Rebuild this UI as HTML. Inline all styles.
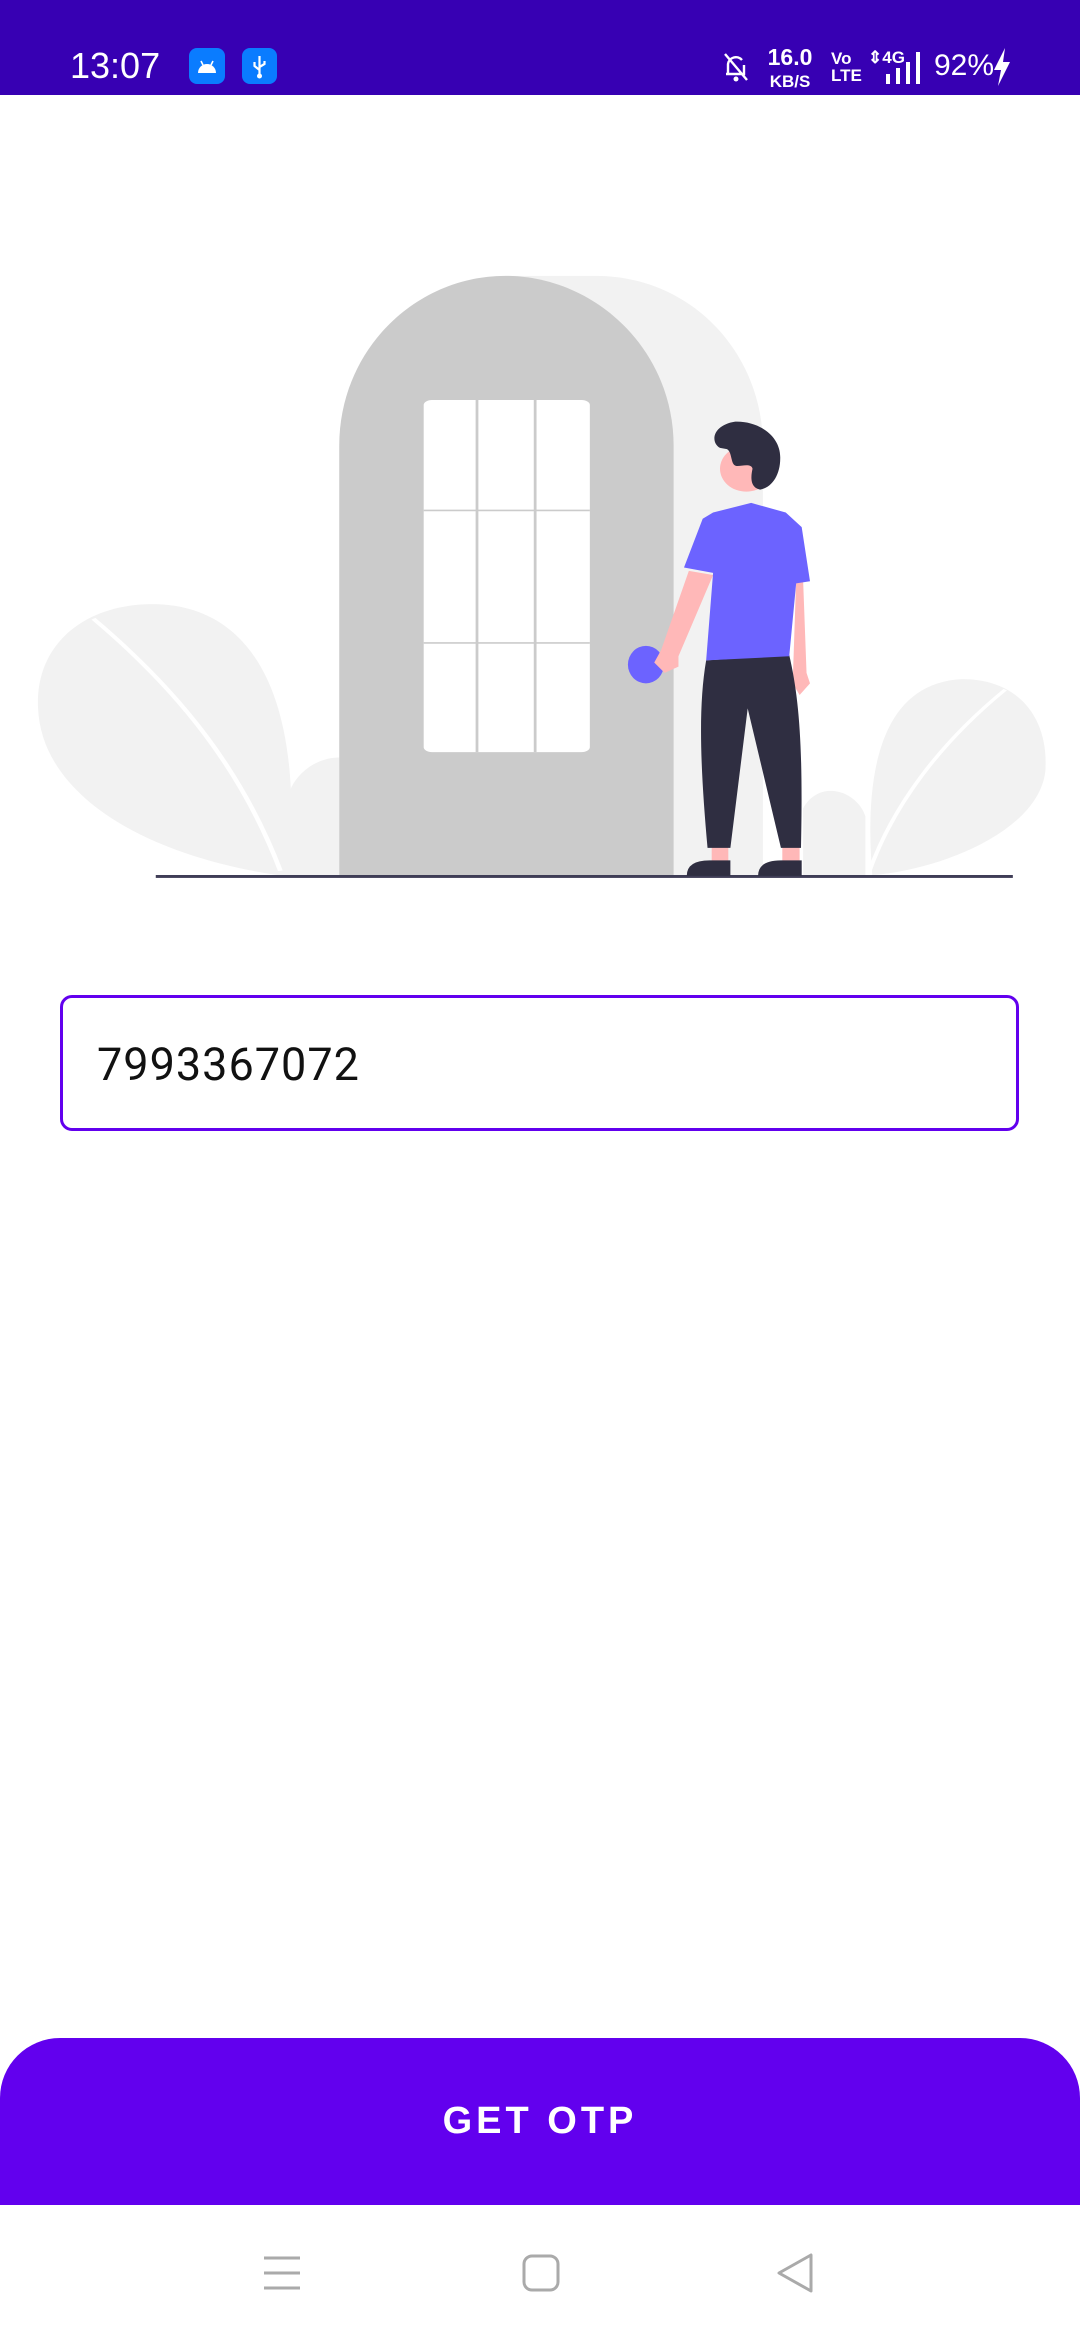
<!DOCTYPE html>
<html><head><meta charset="utf-8"><style>
*{margin:0;padding:0;box-sizing:border-box}
body{width:1080px;height:2340px;background:#fff;position:relative;overflow:hidden;font-family:"Liberation Sans",sans-serif}
.sb{position:absolute;left:0;top:0;width:1080px;height:95px;background:#3700b3;color:#fff}
.input{position:absolute;left:60px;top:995px;width:959px;height:136px;border:3px solid #6200ee;border-radius:12px;font-size:45px;letter-spacing:1px;color:#111;padding-left:34px;line-height:134px;font-family:"Roboto","Liberation Sans",sans-serif}
.btn{position:absolute;left:0;top:2038px;width:1080px;height:167px;background:#6200ee;border-radius:60px 60px 0 0;color:#fff;font-size:38px;letter-spacing:4px;text-align:center;line-height:167px;font-weight:bold}
.nav{position:absolute;left:0;top:2205px;width:1080px;height:135px;background:#fff}
</style></head><body>
<div class="sb">
<div style="position:absolute;left:70px;top:44px;font-size:36px;line-height:44px">13:07</div>
<div style="position:absolute;left:189px;top:48px;width:36px;height:36px;background:#0a7cff;border-radius:8px"></div>
<svg style="position:absolute;left:189px;top:48px" width="36" height="36" viewBox="0 0 36 36"><path d="M9 25 A9 9 0 0 1 27 25 Z" fill="#fff"/><path d="M12 13 l2 4 M24 13 l-2 4" stroke="#fff" stroke-width="1.6"/></svg>
<div style="position:absolute;left:242px;top:48px;width:35px;height:36px;background:#0a7cff;border-radius:8px"></div>
<svg style="position:absolute;left:242px;top:48px" width="35" height="36" viewBox="0 0 35 36"><path d="M17.5 8 V28 M17.5 22 l-5 -4 v-4 M17.5 19 l5 -3 v-3" stroke="#fff" stroke-width="2.2" fill="none"/><circle cx="17.5" cy="28" r="2.5" fill="#fff"/></svg>
<svg style="position:absolute;left:722px;top:48px" width="28" height="36" viewBox="0 0 28 36"><path d="M6 26 V16 A8 8 0 0 1 20 12 M22 17 V26 H4 M3 6 L25 32" stroke="#fff" stroke-width="2.4" fill="none"/><circle cx="14" cy="31" r="2.5" fill="#fff"/></svg>
<div style="position:absolute;left:764px;top:46px;font-size:23px;font-weight:bold;line-height:22px;width:52px;text-align:center">16.0<br><span style="font-size:17px">KB/S</span></div>
<div style="position:absolute;left:831px;top:50px;font-size:17px;font-weight:bold;line-height:17px">Vo<br>LTE</div>
<div style="position:absolute;left:868px;top:48px;font-size:17px;font-weight:bold">⇕4G</div>
<svg style="position:absolute;left:884px;top:50px" width="42" height="34" viewBox="0 0 42 34"><rect x="2" y="24" width="4" height="10" fill="#fff"/><rect x="12" y="18" width="4" height="16" fill="#fff"/><rect x="22" y="12" width="4" height="22" fill="#fff"/><rect x="32" y="2" width="4" height="32" fill="#fff"/></svg>
<div style="position:absolute;left:934px;top:48px;font-size:30px;line-height:36px">92%</div>
<svg style="position:absolute;left:992px;top:48px" width="20" height="38" viewBox="0 0 20 38"><path d="M13 0 L2 22 H9 L6 38 L18 14 H11 Z" fill="#fff"/></svg>
</div>

<svg style="position:absolute;left:0;top:250px" width="1080" height="650" viewBox="0 0 1560 1560" preserveAspectRatio="none">
<path d="M400 1500 C200 1450 60 1300 55 1100 C50 950 120 850 220 850 C330 850 410 980 420 1290 L425 1500Z" fill="#f2f2f2"/>
<path d="M135 885 C260 1060 350 1250 405 1490" stroke="#fff" stroke-width="7" fill="none"/>
<path d="M418 1300 C430 1250 460 1218 490 1218 V1500 H418 Z" fill="#f2f2f2"/>
<path d="M1260 1500 C1250 1300 1260 1040 1390 1030 C1470 1030 1515 1120 1510 1250 C1500 1400 1350 1490 1260 1500Z" fill="#f2f2f2"/>
<path d="M1452 1055 C1360 1180 1290 1330 1255 1495" stroke="#fff" stroke-width="6" fill="none"/>
<path d="M1160 1500 V1340 C1170 1310 1185 1298 1200 1298 C1225 1298 1245 1330 1250 1360 V1500Z" fill="#f2f2f2"/>
<path d="M730 62 H860 C1000 62 1102 250 1102 470 V1500 H730Z" fill="#f2f2f2"/>
<path d="M490 1500 V470 C490 240 600 62 730 62 C860 62 973 240 973 470 V1500 Z" fill="#cbcbcb"/>
<rect x="612" y="360" width="240" height="845" rx="12" fill="#fff"/>
<path d="M689 360 V1205 M773 360 V1205 M612 625 H852 M612 943 H852" stroke="#cbcbcb" stroke-width="4"/>
<rect x="225" y="1500" width="1238" height="7" fill="#3f3d56"/>
<ellipse cx="933" cy="995" rx="26" ry="45" fill="#6c63ff"/>
<path d="M995 770 L1030 780 L980 975 L980 1000 L960 1015 L945 990 L955 960Z" fill="#ffb8b8"/>
<path d="M1150 790 L1160 790 L1165 1015 L1170 1040 L1155 1068 L1145 1040Z" fill="#ffb8b8"/>
<rect x="1028" y="1430" width="24" height="40" fill="#ffb8b8"/>
<rect x="1130" y="1430" width="25" height="40" fill="#ffb8b8"/>
<path d="M1020 985 L1140 972 C1155 1080 1160 1200 1157 1435 L1128 1435 L1080 1100 L1055 1435 L1022 1435 C1012 1250 1008 1100 1020 985Z" fill="#2f2e41"/>
<path d="M992 1502 Q992 1465 1025 1465 H1055 V1502Z M1095 1502 Q1095 1465 1128 1465 H1158 V1502Z" fill="#2f2e41"/>
<path d="M1030 630 L1085 607 L1135 630 L1158 665 L1170 795 L1150 800 L1140 975 L1020 985 L1030 775 L988 762 L1015 645Z" fill="#6c63ff"/>
<ellipse cx="1078" cy="525" rx="38" ry="55" fill="#ffb8b8"/>
<path d="M1040 475 C1025 460 1030 420 1062 412 C1095 410 1128 445 1127 500 C1127 540 1115 570 1098 575 C1082 570 1085 540 1087 525 C1085 510 1070 520 1063 518 C1055 515 1058 485 1050 478Z" fill="#2f2e41"/>
</svg>

<div class="input">7993367072</div>
<div class="btn">GET OTP</div>
<div class="nav">
<svg style="position:absolute;left:262px;top:50px" width="40" height="36" viewBox="0 0 40 36"><path d="M2 3 H38 M2 18 H38 M2 33 H38" stroke="#aaa" stroke-width="3"/></svg>
<svg style="position:absolute;left:522px;top:49px" width="38" height="38" viewBox="0 0 38 38"><rect x="2" y="2" width="34" height="34" rx="8" stroke="#aaa" stroke-width="3" fill="none"/></svg>
<svg style="position:absolute;left:775px;top:47px" width="40" height="42" viewBox="0 0 40 42"><path d="M36 3 V39 L4 21 Z" stroke="#aaa" stroke-width="3" fill="none" stroke-linejoin="round"/></svg>
</div>
</body></html>
